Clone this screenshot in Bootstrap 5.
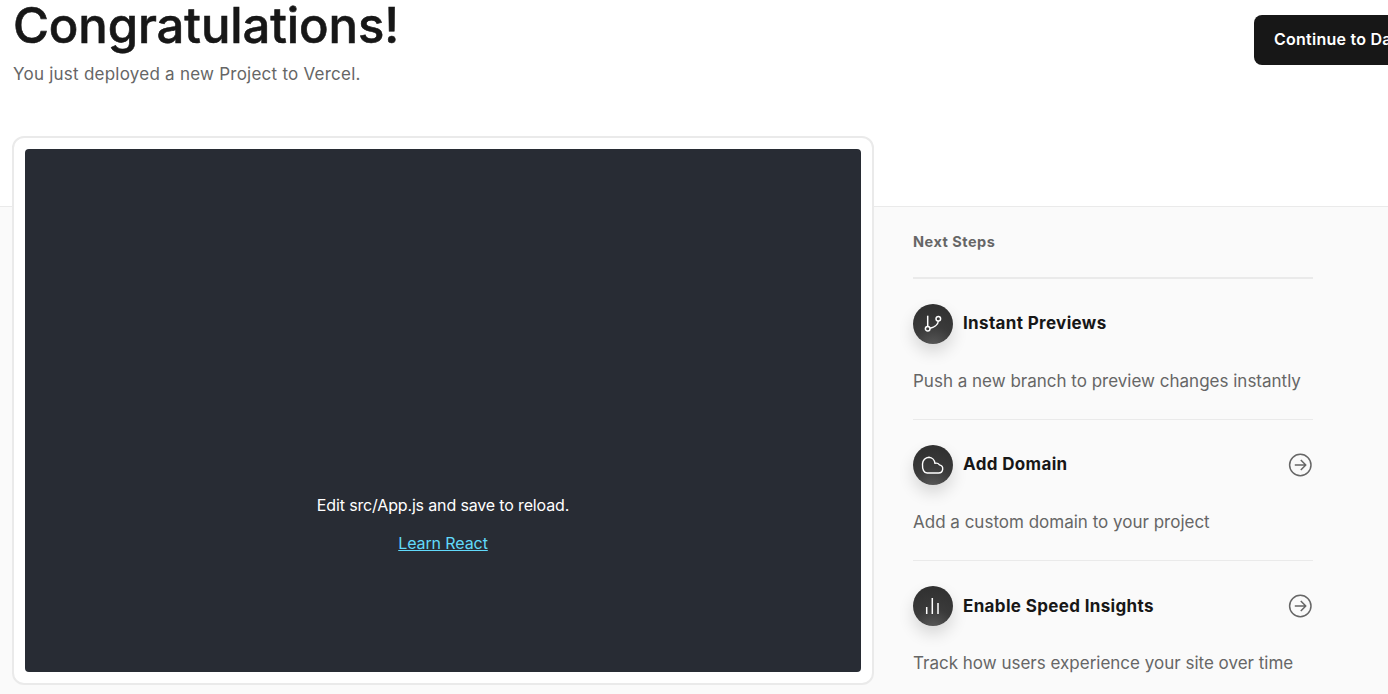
<!DOCTYPE html>
<html lang="en">
<head>
<meta charset="utf-8">
<title>Congratulations</title>
<link rel="stylesheet" href="https://cdn.jsdelivr.net/npm/bootstrap@5.3.0/dist/css/bootstrap.min.css">
<style>
html,body{height:694px;overflow:hidden;background:#fff;}
body{font-family:Inter,"Noto Sans",sans-serif;color:#171717;}
.pg-wrap{width:1480px;}
.top-band{height:207px;border-bottom:1px solid #eaeaea;padding:0 0 0 13px;}
.hero-title{font-size:49px;line-height:56px;font-weight:500;letter-spacing:-.1px;margin:-2px 0 0;color:#171717;-webkit-text-stroke:.6px #171717;}
.hero-sub{font-size:17px;line-height:24px;color:#666;margin:8px 0 0;letter-spacing:.24px;}
.dash-btn{width:226px;height:50px;margin-top:15px;background:#171717;color:#fff;border:0;border-radius:8px;font-size:16px;font-weight:600;text-align:left;padding:0 0 2px 20px;white-space:nowrap;letter-spacing:.25px;}
.lower-band{background:#fafafa;height:487px;padding-left:12px;}
.frame-box{width:862px;height:549px;margin-top:-71px;background:#fff;border:2px solid #eaeaea;border-radius:12px;padding:11px;position:relative;flex:none;}
.app-screen{height:100%;background:#282c34;border-radius:4px;color:#fff;padding-top:344px;text-align:center;font-size:16px;}
.app-screen p{line-height:24px;margin:0 0 14px;letter-spacing:-.15px;}
.app-screen a{color:#61dafb;line-height:24px;letter-spacing:-.1px;}
.steps-col{width:400px;margin-left:39px;flex:none;}
.steps-head{font-size:14.5px;font-weight:700;color:#666;line-height:20px;padding:25px 0 25px;border-bottom:2px solid #eaeaea;margin:0;letter-spacing:.5px;}
.step-item{height:141px;border-bottom:1px solid #eaeaea;padding-top:25px;}
.step-item:last-child{border-bottom:0;}
.step-ico{width:40px;height:40px;border-radius:50%;background:radial-gradient(circle at 50% 110%,#5c5c5c 0%,#3a3a3a 45%,#2e2e2e 100%);box-shadow:0 8px 16px rgba(0,0,0,.14);flex:none;}
.step-name{font-size:17px;font-weight:700;color:#171717;line-height:24px;margin:-2px 0 0 10px;letter-spacing:.35px;}
.step-item:last-child .step-name{margin-top:0;}
.step-desc{font-size:17px;line-height:24px;color:#666;margin:25px 0 0;white-space:nowrap;}
.go-arrow{margin-right:1px;margin-top:-1px;}
.step-item:last-child .go-arrow{margin-top:0;}
</style>
</head>
<body>
<div class="pg-wrap">
  <header class="top-band d-flex justify-content-between">
    <div>
      <h1 class="hero-title">Congratulations!</h1>
      <p class="hero-sub">You just deployed a new Project to Vercel.</p>
    </div>
    <button class="btn dash-btn" type="button">Continue to Dashboard</button>
  </header>
  <main class="lower-band d-flex align-items-start">
    <section class="frame-box">
      <div class="app-screen">
        <p>Edit src/App.js and save to reload.</p>
        <a href="#">Learn React</a>
      </div>
    </section>
    <section class="steps-col">
      <h2 class="steps-head">Next Steps</h2>
      <div class="step-item">
        <div class="d-flex align-items-center">
          <span class="step-ico d-flex align-items-center justify-content-center">
            <svg width="20" height="20" viewBox="0 0 20 20" fill="none" stroke="#fff" stroke-width="1.5"><path d="M4.7 1.7V12.4"/><circle cx="4.7" cy="14.7" r="2.3"/><circle cx="15.3" cy="4.7" r="2.3"/><path d="M15.3 7C15.3 11 10 13.5 7 14.3"/></svg>
          </span>
          <h3 class="step-name">Instant Previews</h3>
        </div>
        <p class="step-desc">Push a new branch to preview changes instantly</p>
      </div>
      <div class="step-item">
        <div class="d-flex align-items-center">
          <span class="step-ico d-flex align-items-center justify-content-center">
            <svg width="24" height="24" viewBox="0 0 24 24" fill="none" stroke="#fff" stroke-width="1.4"><path d="M6.2 20H17.6a4.1 4.1 0 0 0 .9-8.1 4.4 4.4 0 0 0-4.6-1.6A6.4 6.4 0 0 0 8 4.3 6.8 6.8 0 0 0 1.5 11C1.2 16.5 3 20 6.2 20Z" stroke-linejoin="round"/></svg>
          </span>
          <h3 class="step-name flex-grow-1">Add Domain</h3>
          <svg class="go-arrow" width="24" height="24" viewBox="0 0 24 24" fill="none" stroke="#666" stroke-width="1.5"><circle cx="12.3" cy="12" r="10.7"/><path d="M6.8 12h11M12.8 7l5 5-5 5" stroke-linejoin="round"/></svg>
        </div>
        <p class="step-desc">Add a custom domain to your project</p>
      </div>
      <div class="step-item">
        <div class="d-flex align-items-center">
          <span class="step-ico d-flex align-items-center justify-content-center">
            <svg width="20" height="20" viewBox="0 0 20 20" fill="none" stroke="#fff" stroke-width="1.5"><path d="M3.7 18v-7M9.3 18V2M15 18V7"/></svg>
          </span>
          <h3 class="step-name flex-grow-1">Enable Speed Insights</h3>
          <svg class="go-arrow" width="24" height="24" viewBox="0 0 24 24" fill="none" stroke="#666" stroke-width="1.5"><circle cx="12.3" cy="12" r="10.7"/><path d="M6.8 12h11M12.8 7l5 5-5 5" stroke-linejoin="round"/></svg>
        </div>
        <p class="step-desc">Track how users experience your site over time</p>
      </div>
    </section>
  </main>
</div>
<script src="https://cdn.jsdelivr.net/npm/bootstrap@5.3.0/dist/js/bootstrap.bundle.min.js"></script>
</body>
</html>
